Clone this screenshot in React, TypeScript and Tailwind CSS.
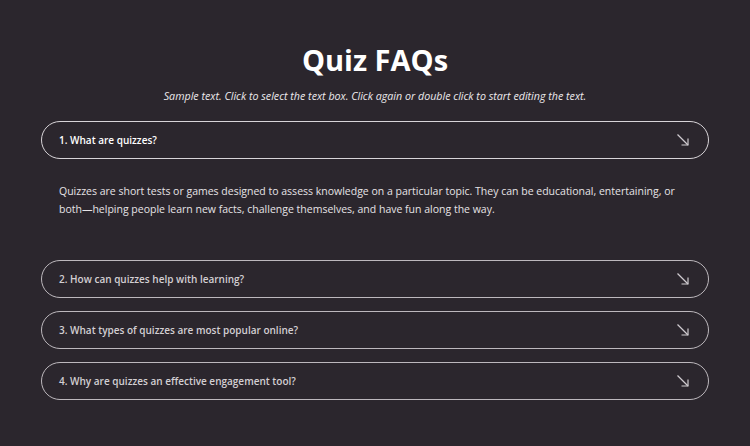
import { useState } from 'react';

const faqs = [
  {
    q: '1. What are quizzes?',
    a: 'Quizzes are short tests or games designed to assess knowledge on a particular topic. They can be educational, entertaining, or both—helping people learn new facts, challenge themselves, and have fun along the way.',
  },
  { q: '2. How can quizzes help with learning?', a: '' },
  { q: '3. What types of quizzes are most popular online?', a: '' },
  { q: '4. Why are quizzes an effective engagement tool?', a: '' },
];

function Arrow() {
  return (
    <svg width="14" height="14" viewBox="0 0 14 14" fill="none" stroke="currentColor" strokeWidth="1.2">
      <path d="M1.5 1.5L12 12" />
      <path d="M12 5.5V12H5.5" />
    </svg>
  );
}

export default function App() {
  const [open, setOpen] = useState(0);

  return (
    <div
      className="min-h-[446px] w-full bg-[#2b262d] text-white px-[41px] pt-[40px]"
      style={{ fontFamily: '"Open Sans", sans-serif' }}
    >
      <h1 className="text-center text-[29px] font-bold leading-[40px]">
        Quiz FAQs
      </h1>
      <p className="mt-[8px] text-center text-[10.7px] italic leading-[16px] text-[#ece9ec]">
        Sample text. Click to select the text box. Click again or double click to start editing the text.
      </p>

      <div className="mt-[17px] flex flex-col gap-[13px]">
        {faqs.map((f, i) => (
          <div key={f.q}>
            <button
              onClick={() => setOpen(i)}
              className={`flex h-[38px] w-full items-center justify-between rounded-full border px-[17px] text-left text-[10px] font-semibold ${
                i === open ? 'border-[#d8d4d8] text-white' : 'border-[#bdb8bd] text-[#d3cfd3]'
              }`}
            >
              <span>{f.q}</span>
              <span className="mr-[1px] text-[#cfcbcf]">
                <Arrow />
              </span>
            </button>
            {i === open && (
              <div className="px-[18px] pt-[23px] pb-[29px] text-[10.5px] leading-[18px] text-[#e6e3e6]">{f.a}</div>
            )}
          </div>
        ))}
      </div>
    </div>
  );
}
